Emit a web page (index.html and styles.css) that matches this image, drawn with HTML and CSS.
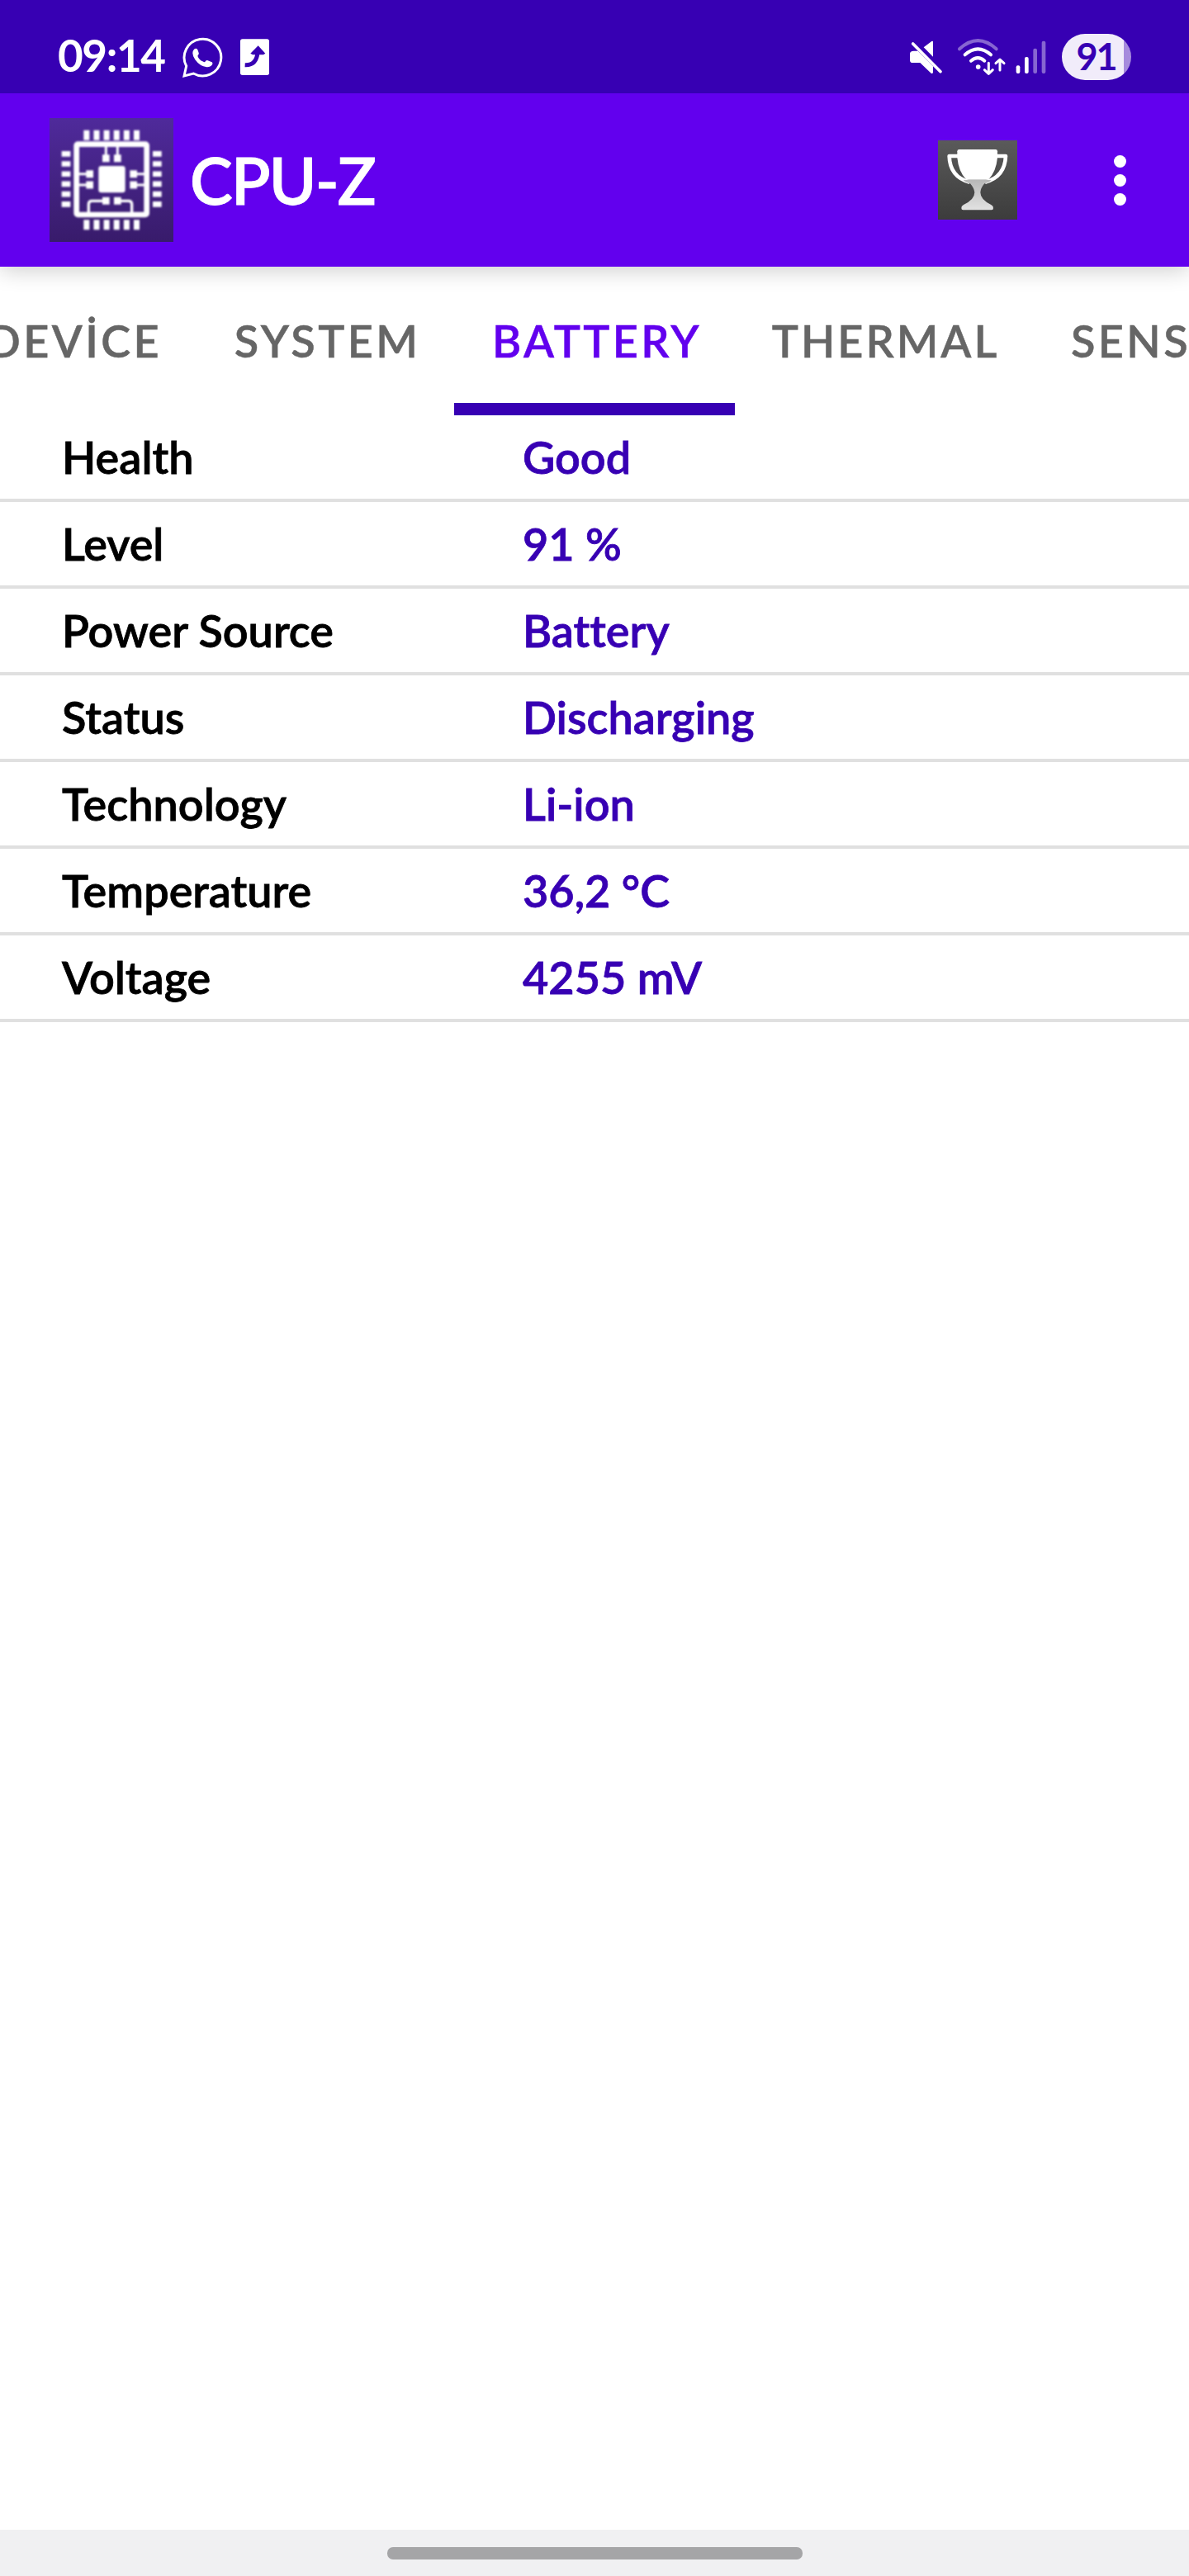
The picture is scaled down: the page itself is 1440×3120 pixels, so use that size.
FILE: index.html
```html
<!DOCTYPE html>
<html lang="en">
<head>
    <meta charset="UTF-8">
    <meta name="viewport" content="width=device-width, initial-scale=1.0">
    <title>CPU-Z</title>
    <link rel="stylesheet" href="styles.css">
</head>
<body>

<div class="status-bar">
    <span class="clock">09:14</span>
    <svg class="whatsapp" viewBox="540 69 156 156">
        <path d="M549 216 L557 180 A67 67 0 1 1 583 207 Z" fill="none" stroke="#fff" stroke-width="9"/>
        <path d="M585 119 q5 -5 10 -2 q3 2 7 15 q2 5 -4 11 q4 13 18 20 q5 3 8 3 q5 -8 9 -7 l17 7 q4 3 1 9 q-6 10 -20 9 q-25 -3 -42 -27 q-16 -24 -4 -38 z" fill="#fff"/>
    </svg>
    <svg class="card" viewBox="744 87 120 120">
        <rect x="753" y="82" width="105" height="131" rx="8" fill="#fff"/>
        <path d="M770 176 Q812 178 816 130" fill="none" stroke="#3700b3" stroke-width="15"/>
        <path d="M790 134 L818 106 L844 134 L837 139 L798 139 Z" fill="#3700b3"/>
    </svg>

    <div class="status-right">
        <svg class="mute" viewBox="60 84 129 129">
            <path d="M116 112 L145 90 Q150 87 150 93 V146 Z" fill="#fff"/>
            <path d="M80 125 H95 L150 181 V202 Q150 210 143 206 L103 168 H76 Q66 168 66 158 V136 Q66 125 80 125 Z" fill="#fff"/>
            <path d="M77 99 L177 200" stroke="#fff" stroke-width="11" stroke-linecap="round"/>
        </svg>
        <svg class="wifi" viewBox="234 81 183 132">
            <g fill="none" stroke="#fff" stroke-linecap="round" stroke-width="12">
                <path d="M246 118 Q313 57 380 118" opacity=".4"/>
                <path d="M266 139 Q313 97 360 139"/>
                <path d="M288 161 Q313 140 337 161"/>
            </g>
            <circle cx="314" cy="183" r="8.5" fill="#fff"/>
            <g fill="none" stroke="#fff" stroke-width="9" stroke-linecap="round" stroke-linejoin="round">
                <path d="M352 169 V207 M337 194 L352 208 L367 194"/>
                <path d="M393 195 V157 M378 170 L393 156 L408 170"/>
            </g>
        </svg>
        <svg class="signal" viewBox="444 87 123 120">
            <g fill="#fff">
                <rect x="452" y="178" width="14" height="29" rx="6"/>
                <rect x="483" y="147" width="14" height="60" rx="6"/>
                <rect x="514" y="116" width="14" height="91" rx="6" opacity=".4"/>
                <rect x="545" y="89" width="14" height="118" rx="6" opacity=".4"/>
            </g>
        </svg>
        <div class="battery-pill"><span>91</span></div>
    </div>
</div>

<header class="app-bar">
    <svg class="app-icon" viewBox="60 39 450 450">
        <defs>
            <linearGradient id="chip-bg" x1="0" y1="0" x2="0" y2="1">
                <stop offset="0" stop-color="#4f2a9b"/>
                <stop offset="1" stop-color="#381b6b"/>
            </linearGradient>
            <filter id="soft"><feGaussianBlur stdDeviation="3"/></filter>
        </defs>
        <rect x="60" y="39" width="450" height="450" fill="url(#chip-bg)"/>
        <g filter="url(#soft)" fill="none" stroke="#fff">
            <rect x="158" y="134" width="255" height="256" rx="5" stroke-width="20"/>
            <rect x="238" y="213" width="97" height="97" rx="10" fill="#fff" stroke="none"/>
            <!-- pins -->
            <path d="M184 101 H394 M184 427 H394" stroke-width="36" stroke-dasharray="21 15.4"/>
            <path d="M120 159 V370 M451 159 V370" stroke-width="32" stroke-dasharray="20 16.6"/>
            <!-- traces -->
            <path d="M265 140 V185 M307 140 V185 M165 242 H206 M165 282 H206 M365 242 H405 M365 282 H405" stroke-width="9"/>
            <path d="M202 385 V352 Q202 340 214 340 H264 M307 340 H347 Q359 340 359 352 V385" stroke-width="10"/>
            <path d="M252 185 H278 M294 185 H320 M193 242 H219 M193 282 H219 M352 242 H378 M352 282 H378 M252 340 H278 M294 340 H320" stroke-width="27"/>
        </g>
    </svg>
    <h1>CPU-Z</h1>
    <svg class="trophy" viewBox="107 89 288 288">
        <defs>
            <linearGradient id="trophy-bg" x1="0" y1="0" x2="0" y2="1">
                <stop offset="0" stop-color="#5a5a5a"/>
                <stop offset="1" stop-color="#3c3c3c"/>
            </linearGradient>
            <linearGradient id="trophy-foot" x1="0" y1="0" x2="0" y2="1">
                <stop offset="0" stop-color="#b8b8b8"/>
                <stop offset="1" stop-color="#e2e2e2"/>
            </linearGradient>
        </defs>
        <rect x="107" y="89" width="288" height="288" fill="url(#trophy-bg)"/>
        <path d="M183 146 H148 Q150 222 222 241 M317 146 H353 Q350 222 278 241" fill="none" stroke="#fff" stroke-width="14" stroke-linejoin="round"/>
        <path d="M184 122 H316 Q323 122 323 129 V152 Q318 204 290 232 H210 Q182 204 177 152 V129 Q177 122 184 122 Z" fill="#fff"/>
        <path d="M199 233 H301 Q291 244 276 246 Q262 262 261 278 Q261 304 300 323 Q309 328 308 335 Q308 342 302 342 H198 Q192 342 192 335 Q191 328 200 323 Q240 304 240 278 Q238 262 224 246 Q209 244 199 233 Z" fill="url(#trophy-foot)"/>
    </svg>
    <div class="menu-dots"><i></i><i></i><i></i></div>
</header>

<nav class="tabs">
    <div class="tab device">DEVİCE</div>
    <div class="tab system">SYSTEM</div>
    <div class="tab battery active">BATTERY</div>
    <div class="tab thermal">THERMAL</div>
    <div class="tab sensors">SENSORS</div>
</nav>

<main class="list">
    <div class="row"><span class="name">Health</span><span class="value">Good</span></div>
    <div class="row"><span class="name">Level</span><span class="value">91 %</span></div>
    <div class="row"><span class="name">Power Source</span><span class="value">Battery</span></div>
    <div class="row"><span class="name">Status</span><span class="value">Discharging</span></div>
    <div class="row"><span class="name">Technology</span><span class="value">Li-ion</span></div>
    <div class="row"><span class="name">Temperature</span><span class="value">36,2 °C</span></div>
    <div class="row"><span class="name">Voltage</span><span class="value">4255 mV</span></div>
</main>

<footer class="nav-bar">
    <div class="handle"></div>
</footer>

</body>
</html>
```
FILE: styles.css
```css
* {
    box-sizing: border-box;
}

body {
    margin: 0;
    width: 1440px;
    height: 3120px;
    display: flex;
    flex-direction: column;
    font-family: Lato, "Noto Sans", sans-serif;
    font-weight: 600;
    font-variant-ligatures: none;
    background-color: #fff;
    overflow: hidden;
}

svg {
    display: block;
    flex: none;
    overflow: visible;
}

/* status bar */
.status-bar {
    height: 113px;
    padding: 25px 70px 0 70px;
    display: flex;
    align-items: center;
    background-color: #3700b3;
    color: #fff;
}

.clock {
    width: 150px;
    padding-bottom: 6px;
    font-size: 53px;
    font-weight: 700;
    letter-spacing: -1.4px;
    white-space: nowrap;
}

.whatsapp {
    width: 52px;
    height: 52px;
}

.card {
    width: 40px;
    height: 40px;
    margin-left: 16px;
}

.status-right {
    margin-left: auto;
    display: flex;
    align-items: center;
}

.mute {
    width: 43px;
    height: 43px;
}

.wifi {
    width: 61px;
    height: 44px;
    margin-left: 15px;
}

.signal {
    width: 41px;
    height: 40px;
    margin: 0 17px 0 9px;
}

.battery-pill {
    width: 84px;
    height: 56px;
    border-radius: 28px;
    display: flex;
    justify-content: center;
    align-items: center;
    background: linear-gradient(to right, #f1ecfa 75px, #a68add 75px);
    color: #3700b3;
    font-size: 45px;
    font-weight: 700;
    letter-spacing: -2px;
}

.battery-pill span {
    padding: 0 1px 2px 0;
}

/* app bar */
.app-bar {
    position: relative;
    z-index: 1;
    height: 210px;
    padding: 0 76px 0 60px;
    display: flex;
    align-items: center;
    background-color: #6200ee;
    color: #fff;
    box-shadow: 0 4px 26px rgba(0, 0, 0, 0.2);
    clip-path: inset(0 0 -50px 0);
}

.app-icon {
    width: 150px;
    height: 150px;
}

h1 {
    margin: 0 auto 0 20px;
    font-size: 78px;
    font-weight: 600;
    letter-spacing: -1.8px;
    -webkit-text-stroke: 0.8px;
}

.trophy {
    width: 96px;
    height: 96px;
}

.menu-dots {
    margin-left: 117px;
    display: flex;
    flex-direction: column;
    gap: 8px;
}

.menu-dots i {
    width: 15px;
    height: 15px;
    border-radius: 50%;
    background-color: #fff;
}

/* tabs */
.tabs {
    height: 180px;
    margin-left: -50px;
    display: flex;
    overflow: hidden;
}

.tab {
    flex: none;
    display: flex;
    justify-content: center;
    align-items: center;
    border-bottom: 15px solid transparent;
    padding: 13px 0 0 3px;
    color: #666;
    font-size: 54px;
    letter-spacing: 3.4px;
    white-space: nowrap;
    -webkit-text-stroke: 0.5px;
}

.device {
    width: 290px;
    justify-content: flex-end;
    padding-right: 44px;
}

.system {
    width: 310px;
}

.battery {
    width: 340px;
    padding-left: 6px;
}

.thermal {
    width: 362px;
    letter-spacing: 3px;
}

.sensors {
    width: 340px;
    justify-content: flex-start;
    padding-left: 45px;
}

.active {
    color: #6200ee;
    border-bottom-color: #3700b3;
}

/* battery info */
.list {
    flex: 1;
}

.row {
    height: 105px;
    padding-left: 75px;
    display: flex;
    align-items: center;
    border-bottom: 4px solid #e0e0e0;
    font-size: 54px;
    color: #000;
    -webkit-text-stroke: 0.8px;
}

.name {
    width: 558px;
}

.value {
    color: #3700b3;
}

/* gesture bar */
.nav-bar {
    height: 51px;
    height: 56px;
    display: flex;
    justify-content: center;
    align-items: center;
    background-color: #f0f0f2;
}

.handle {
    width: 503px;
    height: 15px;
    border-radius: 7px;
    background-color: #a5a5a7;
}
```
